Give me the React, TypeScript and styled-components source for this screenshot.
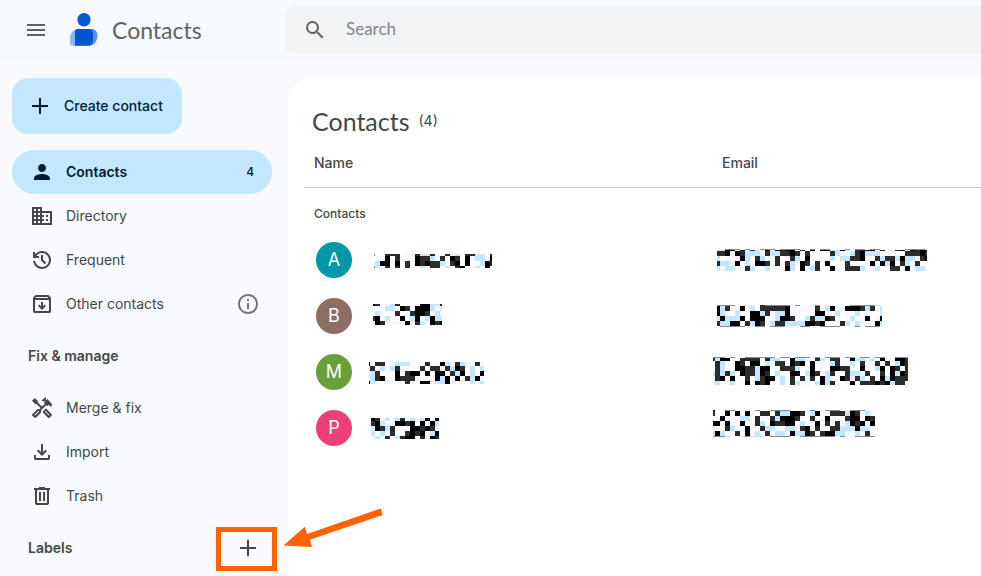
import React from "react";
import styled, { createGlobalStyle } from "styled-components";
import { MdDomain, MdInfoOutline, MdMenu, MdOutlineHandyman, MdPerson, MdSearch } from "react-icons/md";

const GlobalStyle = createGlobalStyle`
  *, *::before, *::after { box-sizing: border-box; }
  body {
    margin: 0;
    overflow: hidden;
    background: #f8faff;
    color: #444746;
    font-family: Inter, Roboto, sans-serif;
    font-size: 14px;
    line-height: 20px;
  }
  button, input { font: inherit; color: inherit; }
`;

const Page = styled.div`
  min-height: 100vh;
`;

const Header = styled.header`
  display: grid;
  grid-template-columns: 286px 1fr;
  height: 61px;
  padding-top: 6px;
  background: #f6fafe;
`;

const Brand = styled.div`
  display: flex;
  align-items: center;
  height: 48px;
  padding-left: 24px;
  color: #5f6368;
`;

const IconButton = styled.button`
  display: flex;
  align-items: center;
  justify-content: center;
  width: 24px;
  height: 24px;
  padding: 0;
  border: 0;
  background: none;
`;

const LogoMark = styled.svg`
  flex: none;
  margin: 0 12px 0 20px;
`;

const BrandName = styled.span`
  font-family: Lato, sans-serif;
  font-size: 23px;
  line-height: 28px;
`;

const SearchBar = styled.form`
  display: flex;
  align-items: center;
  gap: 19px;
  height: 48px;
  padding-left: 17px;
  border-radius: 8px 0 0 8px;
  background: #f1f3f4;
  color: #5f6368;
`;

const SearchInput = styled.input`
  flex: 1;
  min-width: 0;
  padding: 0 0 2px;
  border: 0;
  outline: 0;
  background: none;
  font-family: Lato, sans-serif;
  font-size: 17px;
  line-height: 24px;
  &::placeholder { color: #80868b; opacity: 1; }
`;

const Body = styled.div`
  display: grid;
  grid-template-columns: 288px 1fr;
  padding-top: 17px;
`;

const Sidebar = styled.aside`
  padding: 0 16px 0 12px;
`;

const CreateButton = styled.button`
  display: flex;
  align-items: center;
  gap: 12px;
  height: 56px;
  margin-bottom: 16px;
  padding: 0 19px 0 16px;
  border: 0;
  border-radius: 16px;
  background: #c2e7ff;
  color: #001d35;
  font-weight: 500;
`;

const NavLink = styled.a<{ $active?: boolean }>`
  display: flex;
  align-items: center;
  gap: 12px;
  height: 44px;
  padding: 0 12px 0 18px;
  border-radius: 22px;
  background: ${(p) => (p.$active ? "#c2e7ff" : "none")};
  color: ${(p) => (p.$active ? "#001d35" : "#444746")};
  font-weight: ${(p) => (p.$active ? 600 : 400)};
  text-decoration: none;
`;

const NavText = styled.span`
  flex: 1;
`;

const Count = styled.span`
  padding-right: 6px;
  font-size: 12px;
  font-weight: 500;
`;

const Section = styled.div`
  position: relative;
  display: flex;
  align-items: center;
  justify-content: space-between;
  height: 60px;
  padding: 0 12px 0 16px;
`;

const SectionTitle = styled.h2`
  margin: 0;
  font-size: 14px;
  font-weight: 600;
  line-height: 20px;
`;

const Highlight = styled.div`
  position: absolute;
  top: 9px;
  right: -5px;
  width: 61px;
  height: 44px;
  border: 5px solid #ff6200;
  pointer-events: none;
`;

const Arrow = styled.svg`
  position: absolute;
  top: -10px;
  left: 271px;
  pointer-events: none;
`;

const Main = styled.main`
  min-height: calc(100vh - 78px);
  padding: 27px 0 0 16px;
  border-radius: 24px 0 0 0;
  background: #ffffff;
`;

const Heading = styled.div`
  display: flex;
  align-items: center;
  gap: 9px;
  height: 32px;
  padding-left: 8px;
`;

const Title = styled.h1`
  margin: 0;
  font-family: Lato, sans-serif;
  font-size: 25px;
  font-weight: 400;
  line-height: 32px;
`;

const Table = styled.table`
  width: 100%;
  table-layout: fixed;
  border-collapse: collapse;
`;

const NameCol = styled.col`
  width: 408px;
`;

const HeadCell = styled.th`
  height: 50px;
  padding: 2px 10px 0;
  border-bottom: 1px solid #c0c2c4;
  font-weight: 500;
  text-align: left;
`;

const GroupCell = styled.td`
  height: 45px;
  padding: 8px 10px 0;
  font-size: 12px;
  font-weight: 500;
`;

const Cell = styled.td`
  height: 56px;
  padding: 0 0 0 1px;
`;

const Person = styled.div`
  display: flex;
  align-items: center;
  gap: 17px;
  padding-left: 11px;
`;

const Avatar = styled.span<{ $color: string }>`
  display: flex;
  align-items: center;
  justify-content: center;
  width: 36px;
  height: 36px;
  border-radius: 50%;
  background: ${(p) => p.$color};
  color: #ffffff;
  font-size: 18px;
  font-weight: 400;
`;

const MosaicSvg = styled.svg`
  display: block;
`;

const SYMBOLS = {
  history:
    "M480-120q-138 0-240.5-91.5T122-440h82q14 104 92.5 172T480-200q117 0 198.5-81.5T760-480q0-117-81.5-198.5T480-760q-69 0-129 32t-101 88h110v80H120v-240h80v94q51-64 124.5-99T480-840q75 0 140.5 28.5t114 77q48.5 48.5 77 114T840-480q0 75-28.5 140.5t-77 114q-48.5 48.5-114 77T480-120Zm112-192L440-464v-216h80v184l128 128-56 56Z",
  archive:
    "m480-240 160-160-56-56-64 64v-168h-80v168l-64-64-56 56 160 160ZM200-640v440h560v-440H200Zm0 520q-33 0-56.5-23.5T120-200v-499q0-14 4.5-27t13.5-24l50-61q11-14 27.5-21.5T250-840h460q18 0 34.5 7.5T772-811l50 61q9 11 13.5 24t4.5 27v499q0 33-23.5 56.5T760-120H200Zm16-600h528l-34-40H250l-34 40Z",
  download:
    "M480-320 280-520l56-58 104 104v-326h80v326l104-104 56 58-200 200ZM240-160q-33 0-56.5-23.5T160-240v-120h80v120h480v-120h80v120q0 33-23.5 56.5T720-160H240Z",
  trash:
    "M280-120q-33 0-56.5-23.5T200-200v-520h-40v-80h200v-40h240v40h200v80h-40v520q0 33-23.5 56.5T680-120H280Zm400-600H280v520h400v-520ZM360-280h80v-360h-80v360Zm160 0h80v-360h-80v360Z",
};

const Symbol = ({ name }: { name: keyof typeof SYMBOLS }) => (
  <svg width="24" height="24" viewBox="0 -960 960 960" fill="currentColor" aria-hidden="true">
    <path d={SYMBOLS[name]} />
  </svg>
);

const Plus = () => (
  <svg width="24" height="24" viewBox="0 0 24 24" stroke="currentColor" strokeWidth="2" aria-hidden="true">
    <path d="M12 4v16M4 12h16" />
  </svg>
);

const Logo = () => (
  <LogoMark width="32" height="40" viewBox="0 0 32 40" aria-hidden="true">
    <circle cx="16" cy="9.7" r="6.7" fill="#0b57d0" />
    <path d="M10 19h14a5.300 5.300 0 0 1 5.300 5.300v2.700a8.700 8.700 0 0 1-8.700 8.700H7V22a3 3 0 0 1 3-3z" fill="#5c8dff" />
    <path d="M10.500 19h10a4 4 0 0 1 4 4v9.700a3 3 0 0 1-3 3H4.500a2.500 2.500 0 0 1-2.500-2.500v-5.700A8.500 8.500 0 0 1 10.500 19z" fill="#8ab4ff" />
    <path d="M10 19h11a4 4 0 0 1 4 4v8a5.500 5.500 0 0 1-4.500 4.700H7V22a3 3 0 0 1 3-3z" fill="#0057d0" />
  </LogoMark>
);

type MosaicData = {
  left: number;
  lead: number;
  tail: number;
  top: number;
  heights: number[];
  rows: string[];
};

const INK: Record<string, string> = {
  k: "#000000",
  d: "#2c2c2a",
  g: "#8a8a8a",
  b: "#c2e7ff",
  f: "#f8f9ff",
};

/* Pixelated text: one letter per 5px cell, the first and last columns cut short. */
const Mosaic = ({ data, width, label }: { data: MosaicData; width: number; label: string }) => {
  let y = data.top;
  return (
    <MosaicSvg width={width} height={36} shapeRendering="crispEdges" role="img" aria-label={label}>
      {data.rows.map((row, r) => {
        const rowY = y;
        y += data.heights[r];
        return [...row].map((c, i) =>
          INK[c] ? (
            <rect
              key={`${r}-${i}`}
              x={data.left + (i === 0 ? 0 : data.lead + (i - 1) * 5)}
              y={rowY}
              width={i === 0 ? data.lead : i === row.length - 1 ? data.tail : 5}
              height={data.heights[r]}
              fill={INK[c]}
            />
          ) : null
        );
      })}
    </MosaicSvg>
  );
};

type Contact = { initial: string; color: string; name: MosaicData; email: MosaicData };

const contacts: Contact[] = [
  {
    initial: "A",
    color: "#0097a7",
    name: {
      left: 5, lead: 1, tail: 2, top: 12, heights: [2, 5, 5, 2],
      rows: [
        "gw.ddd.ffdbbdffd.bfddbb.d",
        "f..k.d..fkddbfd.kd.kfbbfk",
        "fbkkfk.d.kdkddb.dk.k..bkd",
        "gb.d.d.d.fb.dd.bfdk..b.k.",
      ],
    },
    email: {
      left: 4, lead: 3, tail: 2, top: 7, heights: [1, 1, 5, 5, 5, 5],
      rows: [
        ".fggg.g..ggg.ggggf.g.gg.f.g.gg.gg.f.f.gggg.",
        "bbkk.kfdb.kfkdkkfdfk.kkbbkf.ddkkfd.bdk.kdkk",
        "ddkfkdbbb.dbbddkd.df.f.dbf.bdkbbbf.ff.dddkd",
        "b.f.fkb.db.fd.fdb.kf.ffb.bbddkf.dbddbkbbfdk",
        "dbb.k.b.kkdfdfdbfkd.d.k.f.d.f..k.kbkfdb.d.f",
        "bfbb.fdb.fb.f.kb.k.bd..kf.dddb.fb.fddfkfbbf",
      ],
    },
  },
  {
    initial: "B",
    color: "#8d6e63",
    name: {
      left: 4, lead: 2, tail: 2, top: 6, heights: [2, 5, 5, 5, 4],
      rows: [
        "kdffbd.fffkkbbd",
        "f..bb.kdfkkkbfb",
        "fb...d.fdkkdfbf",
        "dkfbf.k.bkfbkbb",
        ".kdfff.kfdb.kdk",
      ],
    },
    email: {
      left: 4, lead: 3, tail: 2, top: 7, heights: [1, 5, 5, 5, 5, 1],
      rows: [
        "gggg.fb..dggggg.gfffgf..f..gggggbf",
        "kbd.fkfb.dddddkffff.dfbkffkkkdbd.b",
        "kbf.bf.kkbdfbbk.fff.kkf.b.f.b.f..b",
        "bkbbbk.kkkffbkkdf.bdbbkdf..b.fk.fk",
        "dbbkk.dbkdfbddbbbbkkdk..fdb.b.f.kb",
        "fggggg..gg.gggfffgg.fgggg...gfggg.",
      ],
    },
  },
  {
    initial: "M",
    color: "#689f38",
    name: {
      left: 0, lead: 1, tail: 4, top: 8, heights: [4, 5, 5, 5, 3],
      rows: [
        "k.dd.fbbb..fd.fkb.dbffdf",
        "fdfbfbd....d.ddfdbkd.b.b",
        "fbd.f.kfdkk.kfkk.dbkfbfk",
        "bbdk..kdddf.f.kbkfkfdbkf",
        "kbf.ff.fdf.kkfbbkf.f.bfb",
      ],
    },
    email: {
      left: 0, lead: 2, tail: 3, top: 3, heights: [1, 3, 5, 5, 5, 5, 4],
      rows: [
        "ggg.g..gggggg.gg.ggg.g.ggg.gg.gg.gg.fggg",
        "dbkk.fdddd.dbbffkbbf.dbfddffkbbfbfkffkkd",
        "fdbf.kd.kk.bfddfkdk.kfffbdffb.dffd.d.bkd",
        "fdbf.kkddbkk.fdddb.fk.f.kkddf.kf.bk.kdfd",
        "bdbdb.kddbkd.bf.kk.bkdfbd..dbbfd..d.kbkd",
        "fdkfkf.d.bdkkfbfdfd.d.kbf.kdfdb.dfkbkddd",
        "fbf.b.fkfkdkf.bfdbff.bkbdf.fk.dddkdkbddf",
      ],
    },
  },
  {
    initial: "P",
    color: "#ec407a",
    name: {
      left: 2, lead: 4, tail: 4, top: 8, heights: [3, 5, 5, 5, 3],
      rows: [
        "kdfb.bdfbfbk.k",
        "dkb.fkkdk.kfkb",
        "bkdbd.f.kkdkdf",
        "b.bfd.fdkdkfbk",
        "fbfdfbdkkfd.kd",
      ],
    },
    email: {
      left: 0, lead: 2, tail: 5, top: 0, heights: [1, 5, 5, 5, 5, 5, 1],
      rows: [
        "kf.ggf.f.gf.gggg.ff.gf.gggf.ggg..",
        "d.fk.k.kf.dd.dbbkkd.bkffdddbkd.bf",
        ".fkf.fbb.d..dbkkkdf.d.fkf..dkkfkd",
        "kk.kf.k.fdb.kddkk.bf.kfd.dfbkdk.k",
        "ff.dbf.kf.dbbf.bb.dkfdf.ddbbbkbbf",
        "bkb.fd.kfb.d.bbfkbbkd.dkkbbf.bfd.",
        "gggbf.bgbbb.ggggf.ggggggg.gf.gggg",
      ],
    },
  },
];

const App = () => (
  <>
    <GlobalStyle />
    <Page>
      <Header>
        <Brand>
          <IconButton type="button" aria-label="Main menu">
            <MdMenu size={24} />
          </IconButton>
          <Logo />
          <BrandName>Contacts</BrandName>
        </Brand>
        <SearchBar role="search">
          <IconButton type="submit" aria-label="Search">
            <MdSearch size={24} />
          </IconButton>
          <SearchInput type="text" aria-label="Search contacts" placeholder="Search" />
        </SearchBar>
      </Header>
      <Body>
        <Sidebar>
          <CreateButton type="button">
            <Plus />
            Create contact
          </CreateButton>
          <nav>
            <NavLink href="#contacts" $active>
              <MdPerson size={24} />
              <NavText>Contacts</NavText>
              <Count>4</Count>
            </NavLink>
            <NavLink href="#directory">
              <MdDomain size={24} />
              <NavText>Directory</NavText>
            </NavLink>
            <NavLink href="#frequent">
              <Symbol name="history" />
              <NavText>Frequent</NavText>
            </NavLink>
            <NavLink href="#other">
              <Symbol name="archive" />
              <NavText>Other contacts</NavText>
              <MdInfoOutline size={24} color="#747775" />
            </NavLink>
            <Section>
              <SectionTitle>Fix &amp; manage</SectionTitle>
            </Section>
            <NavLink href="#merge">
              <MdOutlineHandyman size={24} />
              <NavText>Merge &amp; fix</NavText>
            </NavLink>
            <NavLink href="#import">
              <Symbol name="download" />
              <NavText>Import</NavText>
            </NavLink>
            <NavLink href="#trash">
              <Symbol name="trash" />
              <NavText>Trash</NavText>
            </NavLink>
            <Section>
              <SectionTitle>Labels</SectionTitle>
              <IconButton type="button" aria-label="Create label">
                <Plus />
              </IconButton>
              <Highlight />
              <Arrow width="102" height="42" viewBox="0 0 102 42" aria-hidden="true">
                <path d="M0.500 37.500 21.700 18.700 24 26 97.700 0.500 99.700 7 26.700 31.700 29 39z" fill="#ff6200" />
              </Arrow>
            </Section>
          </nav>
        </Sidebar>
        <Main>
          <Heading>
            <Title>Contacts</Title>
            <span>(4)</span>
          </Heading>
          <Table>
            <colgroup>
              <NameCol />
              <col />
            </colgroup>
            <thead>
              <tr>
                <HeadCell scope="col">Name</HeadCell>
                <HeadCell scope="col">Email</HeadCell>
              </tr>
            </thead>
            <tbody>
              <tr>
                <GroupCell colSpan={2}>Contacts</GroupCell>
              </tr>
              {contacts.map((c) => (
                <tr key={c.initial}>
                  <Cell>
                    <Person>
                      <Avatar $color={c.color}>{c.initial}</Avatar>
                      <Mosaic data={c.name} width={130} label="Hidden name" />
                    </Person>
                  </Cell>
                  <Cell>
                    <Mosaic data={c.email} width={220} label="Hidden email" />
                  </Cell>
                </tr>
              ))}
            </tbody>
          </Table>
        </Main>
      </Body>
    </Page>
  </>
);

export default App;
